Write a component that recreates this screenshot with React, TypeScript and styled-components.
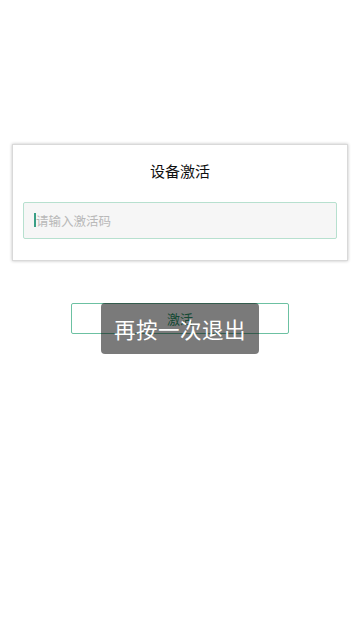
import React from 'react'
import styled, { createGlobalStyle } from 'styled-components'

const GlobalStyle = createGlobalStyle`
    html, body {
        margin:0;
        padding:0;
        background:#ffffff;
        font-family:"Noto Sans CJK SC", "Noto Sans", sans-serif;
    }
`

const Page = styled.div`
    position:relative;
    width:360px;
    height:640px;
    overflow:hidden;
    background:#ffffff;
    display:flex;
    flex-direction:column;
    align-items:center;
`

const Card = styled.div`
    box-sizing:border-box;
    width:336px;
    margin-top:144px;
    padding:14px 10px 21px 10px;
    background:#ffffff;
    border:1px solid #d9d9d9;
    box-shadow:0 0 3px rgba(0,0,0,0.25);
    display:flex;
    flex-direction:column;
    align-items:stretch;
`

const Title = styled.div`
    text-align:center;
    font-size:15px;
    font-weight:400;
    line-height:24px;
    color:#111111;
    margin-bottom:19px;
`

const InputWrap = styled.div`
    position:relative;
    width:100%;
`

const CodeInput = styled.input`
    box-sizing:border-box;
    width:100%;
    height:37px;
    padding:0 10px 0 12px;
    border:1px solid #b7e0cf;
    border-radius:2px;
    background:#f6f6f6;
    font-family:"Noto Sans CJK SC", "Noto Sans", sans-serif;
    font-size:12.5px;
    color:#333333;
    caret-color:transparent;
    outline:none;
    &::placeholder {
        color:#b9b9b9;
    }
`

const Caret = styled.span`
    position:absolute;
    left:11px;
    top:11px;
    width:2px;
    height:14px;
    background:#3a9f86;
    pointer-events:none;
`

const ActivateButton = styled.button`
    box-sizing:border-box;
    width:218px;
    height:31px;
    margin-top:42px;
    border:1px solid #6cc1a2;
    border-radius:2px;
    background:#ffffff;
    color:#2f9a6e;
    font-family:"Noto Sans CJK SC", "Noto Sans", sans-serif;
    font-size:13px;
    padding:0;
`

const Toast = styled.div`
    position:absolute;
    left:101px;
    top:303px;
    width:158px;
    height:51px;
    border-radius:4px;
    background:rgba(0,0,0,0.52);
    color:#ffffff;
    font-size:21.5px;
    display:flex;
    align-items:center;
    justify-content:center;
    letter-spacing:0.5px;
`

const App: React.FC = () => {
    return <Page>
        <GlobalStyle />
        <Card>
            <Title>设备激活</Title>
            <InputWrap>
                <CodeInput placeholder={'请输入激活码'} />
                <Caret />
            </InputWrap>
        </Card>
        <ActivateButton>激活</ActivateButton>
        <Toast>再按一次退出</Toast>
    </Page>
}

export default App
